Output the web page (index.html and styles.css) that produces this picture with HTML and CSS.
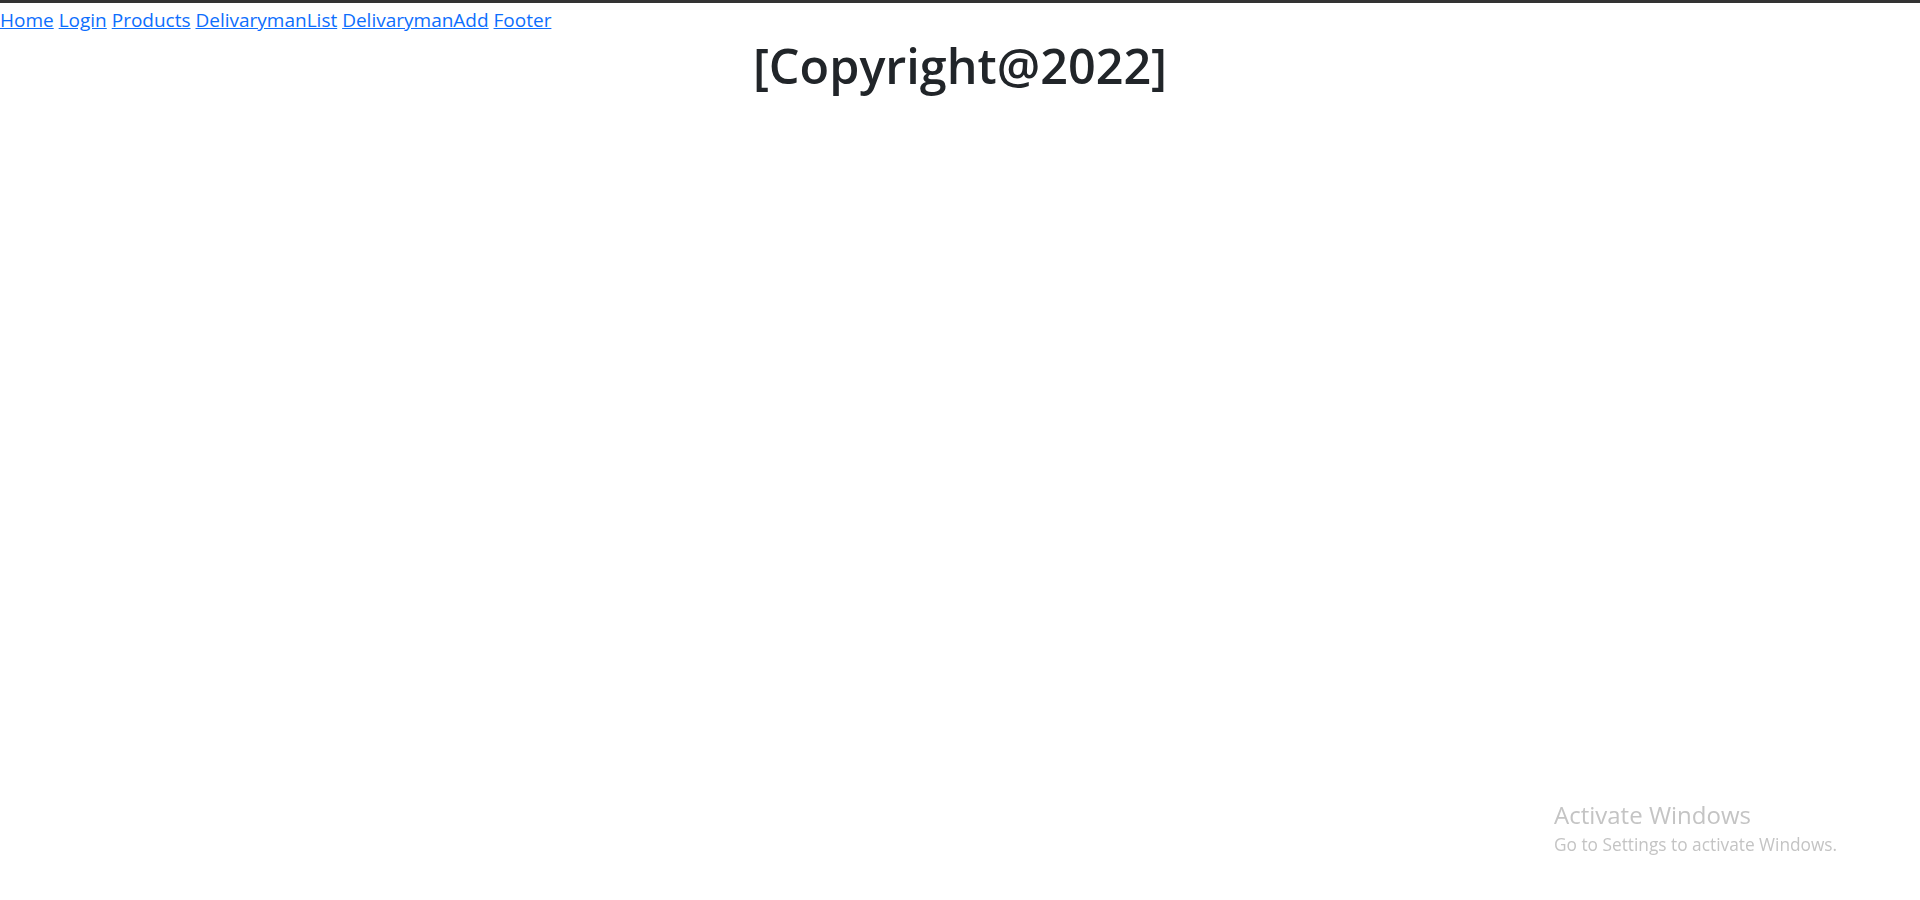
FILE: index.html
```html
<!DOCTYPE html>
<html lang="en">
<head>
<meta charset="utf-8">
<title>Footer</title>
<link rel="stylesheet" href="styles.css">
</head>
<body>
<div class="topbar"></div>
<nav class="nav">
  <a href="#">Home</a>
  <a href="#">Login</a>
  <a href="#">Products</a>
  <a href="#">DelivarymanList</a>
  <a href="#">DelivarymanAdd</a>
  <a href="#">Footer</a>
</nav>
<h1 class="copyright">[Copyright@2022]</h1>
<div class="watermark">
  <div class="wm-title">Activate Windows</div>
  <div class="wm-sub">Go to Settings to activate Windows.</div>
</div>
</body>
</html>
```
FILE: styles.css
```css
html, body {
  margin: 0;
  padding: 0;
  background: #fff;
}
body {
  font-family: "Open Sans", "Noto Sans", sans-serif;
  color: #212529;
  height: 900px;
  overflow: hidden;
}
.topbar {
  height: 3px;
  background: #333333;
}
.nav {
  font-size: 19px;
  line-height: 30px;
  padding-top: 2px;
  white-space: nowrap;
}
.nav a {
  color: #0d6efd;
  text-decoration: underline;
}
.copyright {
  margin: 0;
  padding-top: 0;
  text-align: center;
  font-size: 48.5px;
  font-weight: 600;
  line-height: 60px;
  color: #212529;
}
.watermark {
  position: fixed;
  left: 1554px;
  top: 799px;
  color: #c4c4c4;
  font-family: "Open Sans", sans-serif;
}
.wm-title {
  font-size: 24px;
  line-height: 32px;
}
.wm-sub {
  font-size: 17.3px;
  line-height: 28px;
}
```
